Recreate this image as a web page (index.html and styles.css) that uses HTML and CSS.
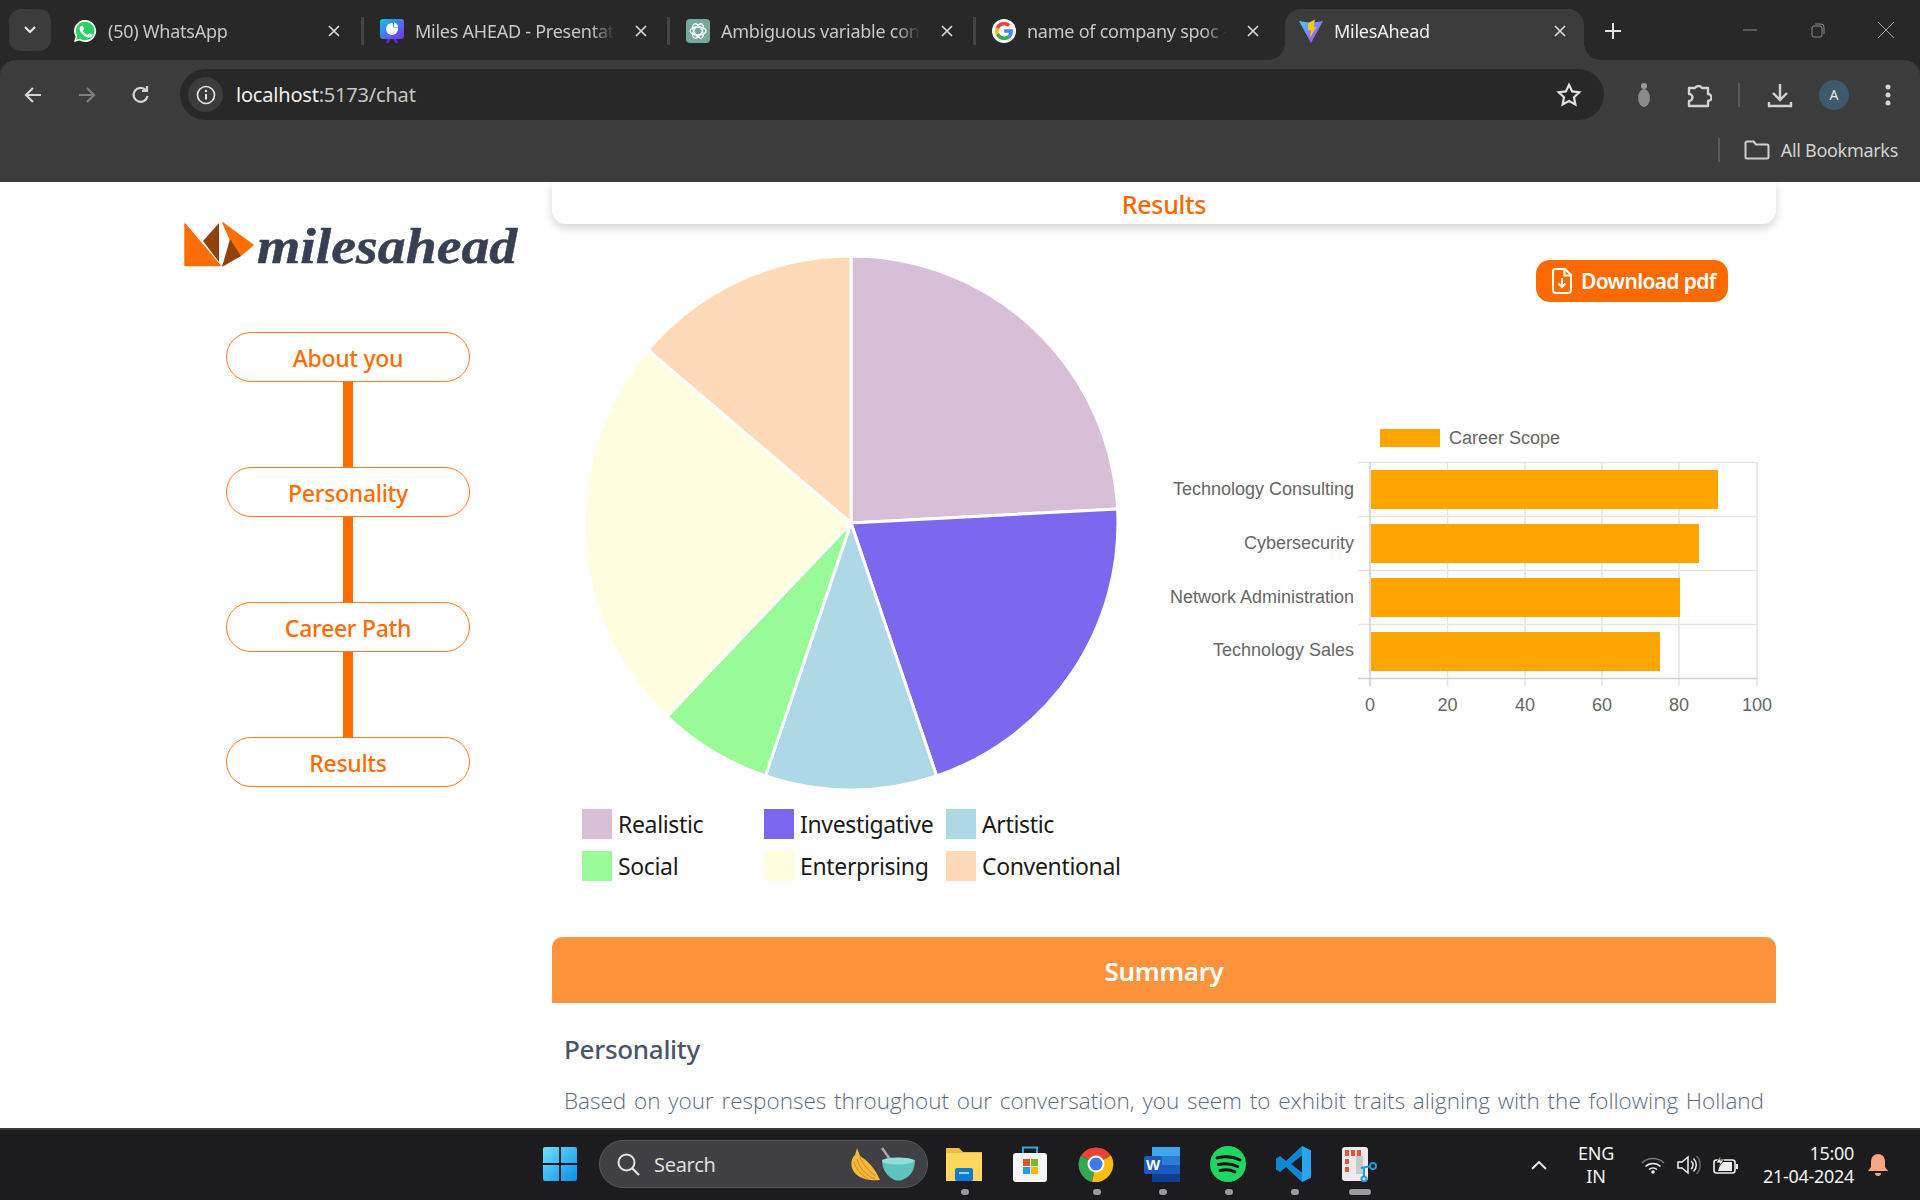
FILE: index.html
```html
<!DOCTYPE html>
<html lang="en">
<head>
<meta charset="utf-8">
<title>MilesAhead</title>
<link rel="stylesheet" href="styles.css">
</head>
<body>
<header class="tabstrip">
  <button class="tab-search"><svg width="14" height="10" viewBox="0 0 14 10"><path d="M2 2l5 5 5-5" fill="none" stroke="#e3e3e3" stroke-width="2.2"/></svg></button>
  <div class="tab first">
    <svg class="fav" viewBox="0 0 24 24"><path d="M12 1a11 11 0 0 0-9.4 16.6L1 23l5.6-1.5A11 11 0 1 0 12 1z" fill="#fff"/><path d="M12 2.800a9.200 9.200 0 0 0-7.800 14l-1 3.900 4-1A9.200 9.200 0 1 0 12 2.800z" fill="#25d366"/><path d="M8.800 6.800c-.3 0-.7.1-1 .5-.4.4-1.200 1.200-1.200 2.700s1.100 3 1.300 3.200c.2.200 2.200 3.500 5.400 4.700 2.700 1 3.200.8 3.800.7.600-.1 1.900-.8 2.100-1.500.3-.7.3-1.400.2-1.500-.1-.1-.3-.2-.7-.4l-2.100-1c-.3-.1-.5-.2-.7.2l-1 1.200c-.2.2-.4.2-.7.1-.3-.2-1.300-.5-2.500-1.600-.9-.8-1.600-1.800-1.700-2.100-.2-.3 0-.5.1-.6l.5-.6c.2-.2.2-.4.3-.6.1-.2 0-.4 0-.6l-1-2.300c-.2-.6-.5-.5-.7-.5z" fill="#fff"/></svg>
    <span class="tab-title">(50) WhatsApp</span>
    <svg class="x" viewBox="0 0 12 12"><path d="M1 1l10 10M11 1L1 11"/></svg>
  </div>
  <i class="tab-sep"></i>
  <div class="tab">
    <svg class="fav" viewBox="0 0 24 24"><defs><linearGradient id="mg" x1="0" y1="0" x2="1" y2="1"><stop offset="0" stop-color="#0fc3e8"/><stop offset="1" stop-color="#7c2bf0"/></linearGradient></defs><rect y="0" width="24" height="20" rx="3" fill="url(#mg)"/><path d="M8 20l-2 4h2.500l2-4zM16 20l2 4h-2.500l-2-4z" fill="#6d28d9"/><circle cx="12" cy="10" r="6" fill="#fff"/><path d="M13 3h4.500v5.500H13z" fill="#1e90e8"/><path d="M14 3.500a5 5 0 0 1 4 4.500h-4z" fill="#fff"/></svg>
    <span class="tab-title">Miles AHEAD - Presentat</span>
    <svg class="x" viewBox="0 0 12 12"><path d="M1 1l10 10M11 1L1 11"/></svg>
  </div>
  <i class="tab-sep"></i>
  <div class="tab">
    <svg class="fav" viewBox="0 0 24 24"><rect width="24" height="24" rx="4" fill="#74aa9c"/><g fill="none" stroke="#fff" stroke-width="1.300"><ellipse cx="12" cy="12" rx="8" ry="4" transform="rotate(60 12 12)"/><ellipse cx="12" cy="12" rx="8" ry="4" transform="rotate(120 12 12)"/><ellipse cx="12" cy="12" rx="8" ry="4"/></g></svg>
    <span class="tab-title">Ambiguous variable con</span>
    <svg class="x" viewBox="0 0 12 12"><path d="M1 1l10 10M11 1L1 11"/></svg>
  </div>
  <i class="tab-sep"></i>
  <div class="tab">
    <svg class="fav" viewBox="0 0 24 24"><circle cx="12" cy="12" r="12" fill="#fff"/><path d="M12.200 10.300v3.500h5a4.500 4.500 0 0 1-1.900 2.900l2.900 2.300c1.700-1.600 2.700-3.900 2.700-6.600 0-.7-.1-1.400-.2-2.100z" fill="#4285f4"/><path d="M6.900 13.700l-3 2.300A9.200 9.200 0 0 0 12.200 21c2.500 0 4.600-.8 6-2.100l-2.900-2.300c-.8.5-1.800.9-3.100.9-2.400 0-4.500-1.600-5.300-3.800z" fill="#34a853"/><path d="M3.900 7.900a9 9 0 0 0 0 8.100l3-2.300a5.500 5.500 0 0 1 0-3.500z" fill="#fbbc05"/><path d="M12.200 6.500c1.400 0 2.600.5 3.600 1.400l2.600-2.600A8.900 8.900 0 0 0 12.200 3 9.200 9.200 0 0 0 3.900 7.900l3 2.300c.8-2.200 2.900-3.700 5.300-3.700z" fill="#ea4335"/></svg>
    <span class="tab-title">name of company spoc -</span>
    <svg class="x" viewBox="0 0 12 12"><path d="M1 1l10 10M11 1L1 11"/></svg>
  </div>
  <div class="tab active">
    <svg class="fav" viewBox="0 0 24 24"><defs><linearGradient id="vg" x1="0" y1="0" x2="1" y2="1"><stop offset="0" stop-color="#41d1ff"/><stop offset="1" stop-color="#bd34fe"/></linearGradient></defs><path d="M0 2l12 2 12-2-12 22z" fill="url(#vg)"/><path d="M9 4l7-3.500-1.500 8 3-.8L11 19l1-8-3 .6z" fill="#ffc517"/></svg>
    <span class="tab-title">MilesAhead</span>
    <svg class="x" viewBox="0 0 12 12"><path d="M1 1l10 10M11 1L1 11"/></svg>
  </div>
  <svg class="new-tab" viewBox="0 0 16 16"><path d="M8 0v16M0 8h16"/></svg>
  <div class="win-controls">
    <svg viewBox="0 0 16 16"><path d="M1 8h14" stroke="#8b8b8b"/></svg>
    <svg viewBox="0 0 16 16"><rect x="2" y="4" width="10" height="11" rx="2" stroke="#8b8b8b" fill="none"/><path d="M5 2h6a3 3 0 0 1 3 3v7" stroke="#8b8b8b" fill="none"/></svg>
    <svg viewBox="0 0 16 16"><path d="M0 0l16 16M16 0L0 16" stroke="#a0a0a0"/></svg>
  </div>
</header>

<div class="toolbar">
  <nav class="nav-btns">
    <svg viewBox="0 0 20 20"><path d="M18 10H3M10 3l-7 7 7 7" class="ic"/></svg>
    <svg viewBox="0 0 20 20"><path d="M2 10h15M10 3l7 7-7 7" class="ic dim"/></svg>
    <svg viewBox="0 0 20 20"><path d="M16.500 11a7 7 0 1 1-1.800-6M16 1v5h-5" class="ic"/></svg>
  </nav>
  <div class="omnibox">
    <span class="info"><svg viewBox="0 0 20 20" width="20" height="20"><circle cx="10" cy="10" r="8.500" fill="none" stroke="#e3e3e3" stroke-width="1.700"/><path d="M10 9v5.500" stroke="#e3e3e3" stroke-width="2"/><circle cx="10" cy="6" r="1.200" fill="#e3e3e3"/></svg></span>
    <span class="url">localhost<span class="url-dim">:5173/chat</span></span>
    <svg class="star" viewBox="0 0 24 24" width="26" height="26"><path d="M12 2.500l2.900 6.200 6.600.8-4.900 4.600 1.300 6.700-5.900-3.300-5.900 3.300 1.300-6.700L2.500 9.500l6.600-.8z" fill="none" stroke="#e3e3e3" stroke-width="2"/></svg>
  </div>
  <div class="tool-icons">
    <svg class="i-mouse" viewBox="0 0 14 26" width="14" height="26"><ellipse cx="7" cy="16" rx="6" ry="9" fill="#8a8a8a"/><circle cx="7" cy="4" r="3" fill="#9c9c9c"/></svg>
    <svg class="i-ext" viewBox="0 0 26 26" width="26" height="26"><path d="M3 6h6a4 4 0 0 1 7 0h6v6a3.500 3.500 0 0 1 0 7v5H3v-5a3.500 3.500 0 0 0 0-7z" fill="none" stroke="#d2d2d2" stroke-width="2.400" stroke-linejoin="round"/></svg>
    <i class="tool-sep"></i>
    <svg class="i-dl" viewBox="0 0 26 26" width="26" height="26"><path d="M13 2v15M6 11l7 7 7-7M2 20v4h22v-4" fill="none" stroke="#d2d2d2" stroke-width="2.400"/></svg>
    <span class="avatar">A</span>
    <svg class="i-dots" viewBox="0 0 6 24" width="6" height="24"><circle cx="3" cy="4" r="2.500"/><circle cx="3" cy="12" r="2.500"/><circle cx="3" cy="20" r="2.500"/></svg>
  </div>
</div>

<div class="bookmarks">
  <i class="bm-sep"></i>
  <svg viewBox="0 0 26 20" width="26" height="20"><path d="M1.500 3a1.500 1.500 0 0 1 1.500-1.500h6.500l2.500 3h11a1.500 1.500 0 0 1 1.500 1.500v11a1.500 1.500 0 0 1-1.500 1.500H3A1.500 1.500 0 0 1 1.500 17z" fill="none" stroke="#cfcfcf" stroke-width="2"/></svg>
  <span class="bm-label">All Bookmarks</span>
</div>

<main class="page">
  <aside class="sidebar">
    <div class="logo">
      <svg class="logo-mark" viewBox="0 0 72 48" width="72" height="48"><path d="M1 2l35 41.500H1z" fill="#ff6d05" stroke="#ff6d05" stroke-width="1.500" stroke-linejoin="round"/><path d="M19 19l16-18v39z" fill="#93400a"/><path d="M39 1l30 22-13 11-10-17z" fill="#ff6d05" stroke="#ff6d05" stroke-width="1.500" stroke-linejoin="round"/><path d="M38 45l8-28 11 17z" fill="#93400a"/></svg>
      <span class="logo-text">milesahead</span>
    </div>
    <nav class="steps">
      <div class="step">About you</div>
      <i class="step-line"></i>
      <div class="step">Personality</div>
      <i class="step-line"></i>
      <div class="step">Career Path</div>
      <i class="step-line"></i>
      <div class="step">Results</div>
    </nav>
  </aside>

  <section class="content">
    <div class="results-card">Results</div>
    <div class="charts">
      <div class="pie-col">
        <svg class="pie" viewBox="-268 -268 536 536" width="536" height="536">
          <g stroke="#fff" stroke-width="3" stroke-linejoin="round">
            <path d="M0 0L0-267A267 267 0 0 1 266.600-14Z" fill="#d8bfd8"/>
            <path d="M0 0L266.600-14A267 267 0 0 1 85.600 252.900Z" fill="#7b68ee"/>
            <path d="M0 0L85.600 252.900A267 267 0 0 1-85.600 252.900Z" fill="#add8e6"/>
            <path d="M0 0L-85.600 252.900A267 267 0 0 1-184.100 193.400Z" fill="#98fb98"/>
            <path d="M0 0L-184.100 193.400A267 267 0 0 1-203.300-173Z" fill="#ffffe0"/>
            <path d="M0 0L-203.300-173A267 267 0 0 1 0-267Z" fill="#ffdab9"/>
          </g>
        </svg>
        <ul class="legend">
          <li><i class="sw sw-r"></i>Realistic</li>
          <li><i class="sw sw-i"></i>Investigative</li>
          <li><i class="sw sw-a"></i>Artistic</li>
          <li><i class="sw sw-s"></i>Social</li>
          <li><i class="sw sw-e"></i>Enterprising</li>
          <li><i class="sw sw-c"></i>Conventional</li>
        </ul>
      </div>
      <div class="bar-col">
        <button class="dl-btn"><svg viewBox="0 0 20 26" width="20" height="26"><path d="M3 1h10l6 6v15a3 3 0 0 1-3 3H4a3 3 0 0 1-3-3V3a2 2 0 0 1 2-2zM12.500 1v6.500H19M10 10v9M6.500 15.500L10 19l3.500-3.500" fill="none" stroke="#fff" stroke-width="2"/></svg>Download pdf</button>
        <svg class="bars" viewBox="0 0 626 300" width="626" height="300">
          <rect x="230" y="9" width="60" height="18" fill="#ffa500"/>
          <text x="299" y="24" class="ct">Career Scope</text>
          <g stroke="#e5e5e5" stroke-width="1.500">
            <path d="M208 42.500H607M208 96.500H607M208 150.500H607M208 204.500H607"/>
            <path d="M297.500 42V266M375 42V266M452 42V266M529 42V266M607 42V266"/>
          </g>
          <path d="M208 258.500H607M220 42V266" stroke="#cfcfcf" stroke-width="1.500"/>
          <g fill="#ffa500">
            <rect x="221" y="50" width="347" height="39"/>
            <rect x="221" y="104" width="328" height="39"/>
            <rect x="221" y="158" width="309" height="39"/>
            <rect x="221" y="212" width="289" height="39"/>
          </g>
          <g class="ct" text-anchor="end">
            <text x="204" y="75">Technology Consulting</text>
            <text x="204" y="129">Cybersecurity</text>
            <text x="204" y="183">Network Administration</text>
            <text x="204" y="236">Technology Sales</text>
          </g>
          <g class="ct" text-anchor="middle">
            <text x="220" y="291">0</text>
            <text x="297.500" y="291">20</text>
            <text x="375" y="291">40</text>
            <text x="452" y="291">60</text>
            <text x="529" y="291">80</text>
            <text x="607" y="291">100</text>
          </g>
        </svg>
      </div>
    </div>
    <div class="summary-bar">Summary</div>
    <div class="summary-body">
      <h2>Personality</h2>
      <p>Based on your responses throughout our conversation, you seem to exhibit traits aligning with the following Holland personality types:</p>
    </div>
  </section>
</main>

<footer class="taskbar">
  <div class="task-center">
    <svg class="win" viewBox="0 0 34 34" width="34" height="34"><defs><linearGradient id="wg" x1="0" y1="0" x2="1" y2="1"><stop offset="0" stop-color="#6fe0ff"/><stop offset="1" stop-color="#0a8fe8"/></linearGradient></defs><path d="M0 2a2 2 0 0 1 2-2h14v16H0zM18 0h14a2 2 0 0 1 2 2v14H18zM0 18h16v16H2a2 2 0 0 1-2-2zM18 18h16v14a2 2 0 0 1-2 2H18z" fill="url(#wg)"/></svg>
    <div class="search">
      <svg viewBox="0 0 24 24" width="24" height="24"><circle cx="10.500" cy="10.500" r="8" fill="none" stroke="#e6e6e6" stroke-width="2"/><path d="M16 16l7 7" stroke="#e6e6e6" stroke-width="2.200"/></svg>
      <span>Search</span>
      <svg class="search-art" viewBox="0 0 66 34" width="66" height="34"><path d="M8 1l3 8c7 4 15 12 20 24-10 1-21-1-26-8C0 18 3 10 6 8z" fill="#f5b93a"/><path d="M8 12c2 8 8 16 18 20M5 15c2 7 7 13 14 17M11 10c3 7 8 14 16 19" stroke="#d38a1c" fill="none"/><path d="M33 1l10 14" stroke="#a9a5ad" stroke-width="2.500"/><path d="M33 13c8-3 24-3 33 0 0 10-5 17-11 19-3 2-8 2-11 0-6-3-11-10-11-19z" fill="#5cc4bd"/><ellipse cx="49" cy="14" rx="16" ry="3.500" fill="#8ee0d4"/></svg>
    </div>
    <div class="apps">
      <div class="app"><svg viewBox="0 0 36 36"><path d="M0 2h13l4 4h19v29H0z" fill="#f4b93f"/><path d="M0 7h36v28H0z" fill="#ffd75e"/><rect x="9" y="22" width="18" height="13" rx="2" fill="#0f7bd0"/><path d="M13 27h10" stroke="#9bd8ff" stroke-width="2"/></svg><i class="dot"></i></div>
      <div class="app"><svg viewBox="0 0 36 36"><path d="M11 7V1.500h14V7" fill="none" stroke="#29a8e8" stroke-width="2"/><rect x="1" y="7" width="34" height="29" rx="3" fill="#f5f5f5"/><rect x="11" y="13" width="7" height="7" fill="#ea4f2a"/><rect x="19" y="13" width="7" height="7" fill="#7cb82a"/><rect x="11" y="21" width="7" height="7" fill="#1aa1e8"/><rect x="19" y="21" width="7" height="7" fill="#fdb900"/></svg><i class="dot hidden"></i></div>
      <div class="app"><svg viewBox="0 0 36 36"><path d="M18 18L3 9.500A18 18 0 0 1 33 9.500z" fill="#ea4335"/><path d="M18 18L3 9.500A18 18 0 0 0 14 36z" fill="#34a853"/><path d="M18 18l15-8.500A18 18 0 0 1 14 36z" fill="#fbbc05"/><circle cx="18" cy="18" r="8.500" fill="#fff"/><circle cx="18" cy="18" r="6.500" fill="#3b7bea"/></svg><i class="dot"></i></div>
      <div class="app"><svg viewBox="0 0 36 36"><rect x="8" y="1" width="28" height="35" rx="2" fill="#2b7cd3"/><rect x="8" y="1" width="28" height="9" fill="#41a5ee"/><rect x="8" y="19" width="28" height="9" fill="#185abd"/><rect x="8" y="28" width="28" height="8" fill="#103f91"/><rect x="0" y="10" width="18" height="18" rx="2" fill="#185abd"/><text x="9" y="24" class="word-w">W</text></svg><i class="dot"></i></div>
      <div class="app"><svg viewBox="0 0 36 36"><circle cx="18" cy="18" r="18" fill="#1ed760"/><path d="M7 12c8-2 16-1.500 23 2M8.500 18.500c7-1.500 13-1 19 2M10 24.500c5-1 11-.8 15 1.500" fill="none" stroke="#111" stroke-width="3" stroke-linecap="round"/></svg><i class="dot"></i></div>
      <div class="app"><svg viewBox="0 0 36 36"><path d="M26 0l9 4.500v27L26 36 10 21l-6 5-4-2.500V12.500L4 10l6 5z" fill="#0e86d4"/><path d="M26 9.500L15 18l11 8.500z" fill="#1c1c1c"/><path d="M26 0l9 4.500v27L26 36z" fill="#27a5ee"/></svg><i class="dot"></i></div>
      <div class="app"><svg viewBox="0 0 36 36"><rect x="0" y="1" width="26" height="34" rx="3" fill="#eceaea"/><rect x="3" y="4" width="4" height="6" fill="#e8513a"/><rect x="9" y="4" width="4" height="6" fill="#e8513a"/><rect x="15" y="4" width="4" height="6" fill="#e8513a"/><rect x="3" y="13" width="4" height="5" fill="#e8513a"/><rect x="3" y="21" width="4" height="5" fill="#e8513a"/><rect x="14" y="10" width="7" height="18" fill="#c9c9c9"/><path d="M19 22l10-2M22 30V22" stroke="#1f9bd8" stroke-width="2"/><circle cx="31" cy="20" r="3" fill="none" stroke="#1f9bd8" stroke-width="2"/><circle cx="22" cy="33" r="2.500" fill="none" stroke="#1f9bd8" stroke-width="2"/></svg><i class="dot wide"></i></div>
    </div>
  </div>
  <div class="tray">
    <svg viewBox="0 0 16 10" width="16" height="10"><path d="M1 9l7-7 7 7" fill="none" stroke="#eee" stroke-width="1.800"/></svg>
    <div class="lang"><div>ENG</div><div>IN</div></div>
    <svg class="tr-wifi" viewBox="0 0 24 18" width="24" height="18"><path d="M1 7a16 16 0 0 1 22 0" fill="none" stroke="#777" stroke-width="1.500"/><path d="M4.500 10.500a11 11 0 0 1 15 0M8 13.500a6 6 0 0 1 8 0" fill="none" stroke="#eee" stroke-width="1.500"/><circle cx="12" cy="16" r="1.800" fill="#eee"/></svg>
    <svg class="tr-vol" viewBox="0 0 24 20" width="24" height="20"><path d="M1 7h4l6-5v16l-6-5H1z" fill="none" stroke="#eee" stroke-width="1.500"/><path d="M14 6a5 5 0 0 1 0 8M16.500 3.500a9 9 0 0 1 0 13" fill="none" stroke="#eee" stroke-width="1.500"/><path d="M19.500 1a13 13 0 0 1 0 18" fill="none" stroke="#666" stroke-width="1.500"/></svg>
    <svg class="tr-bat" viewBox="0 0 26 20" width="26" height="20"><rect x="1" y="5" width="21" height="13" rx="2.500" fill="none" stroke="#eee" stroke-width="1.600"/><path d="M24 9v5" stroke="#eee" stroke-width="2"/><path d="M8 7h11v9H5z" fill="#eee"/><path d="M8 0L3 8h4l-2 5 6-8H7z" fill="#eee" stroke="#1c1c1c" stroke-width=".8"/></svg>
    <div class="clock"><div>15:00</div><div>21-04-2024</div></div>
    <svg class="bell" viewBox="0 0 20 24" width="20" height="24"><path d="M10 1a7 7 0 0 0-7 7v6l-3 4h20l-3-4V8a7 7 0 0 0-7-7z" fill="#f9a57f"/><path d="M7 20a3 3 0 0 0 6 0z" fill="#f9a57f"/></svg>
  </div>
</footer>
</body>
</html>
```

FILE: styles.css
```css
* { box-sizing: border-box; }
html, body { margin: 0; padding: 0; }
body {
  width: 1920px; height: 1200px; overflow: hidden;
  display: flex; flex-direction: column;
  font-family: "Noto Sans", "Open Sans", sans-serif;
  background: #282828;
}
i { display: block; font-style: normal; }

/* tab strip */
.tabstrip { height: 60px; flex: none; background: #282828; display: flex; align-items: flex-start; position: relative; }
.tab-search { width: 42px; height: 42px; margin: 9px 0 0 9px; border: 0; border-radius: 12px; background: #3c3c3c; display: flex; align-items: center; justify-content: center; padding: 0; }
.tab { width: 303px; height: 51px; margin-top: 9px; padding: 0 0 7px 16px; display: flex; align-items: center; gap: 11px; color: #c7c7c7; flex: none; }
.tab.first { width: 300px; margin-left: 10px; padding-left: 12px; }
.fav { width: 24px; height: 24px; flex: none; }
.tab-title { font-size: 18px; width: 200px; white-space: nowrap; overflow: hidden; letter-spacing: -.25px; -webkit-mask-image: linear-gradient(90deg, #000 88%, transparent); mask-image: linear-gradient(90deg, #000 88%, transparent); }
.x { width: 12px; height: 12px; margin-left: 9px; margin-top: -1px; flex: none; }
.x path { stroke: #d8d8d8; stroke-width: 1.700; fill: none; }
.tab-sep { width: 3px; height: 28px; background: #444; margin-top: 17px; flex: none; }
.tab.active { width: 299px; margin-left: 6px; background: #3c3c3c; border-radius: 16px 16px 0 0; color: #f0f0f0; padding-left: 14px; position: relative; }
.tab.active::before, .tab.active::after { content: ""; position: absolute; bottom: 0; width: 16px; height: 16px; }
.tab.active::before { left: -16px; background: radial-gradient(circle at 0 0, transparent 15.5px, #3c3c3c 16px); }
.tab.active::after { right: -16px; background: radial-gradient(circle at 100% 0, transparent 15.5px, #3c3c3c 16px); }
.tabstrip .new-tab { width: 16px; height: 16px; margin: 23px 0 0 21px; flex: none; }
.new-tab path { stroke: #e3e3e3; stroke-width: 2; }
.win-controls { margin-left: auto; display: flex; gap: 52px; padding: 22px 26px 0 0; }
.win-controls svg { width: 16px; height: 16px; }

/* toolbar */
.toolbar { height: 69px; flex: none; background: #3c3c3c; border-radius: 16px 16px 0 0; display: flex; align-items: center; }
.nav-btns { display: flex; gap: 34px; width: 180px; padding-left: 23px; flex: none; }
.nav-btns svg { width: 20px; height: 20px; }
.ic { fill: none; stroke: #d4d4d4; stroke-width: 2.200; }
.ic.dim { stroke: #7f7f7f; }
.omnibox { width: 1424px; height: 51px; background: #282828; border-radius: 26px; display: flex; align-items: center; padding: 0 22px 0 8px; flex: none; }
.info { width: 35px; height: 35px; border-radius: 50%; background: #3c3c3c; display: flex; align-items: center; justify-content: center; flex: none; }
.url { margin-left: 13px; font-size: 20px; color: #f0f0f0; letter-spacing: -.2px; }
.url-dim { color: #c6c6c6; }
.star { margin-left: auto; }
.tool-icons { display: flex; align-items: center; flex: 1; height: 40px; padding-left: 33px; }
.i-ext { margin-left: 35px; }
.tool-sep { width: 2px; height: 24px; background: #5a5a5a; margin-left: 26px; }
.i-dl { margin-left: 27px; }
.avatar { width: 30px; height: 30px; border-radius: 50%; background: #3d5a6c; color: #e8e8e8; font-size: 14px; display: flex; align-items: center; justify-content: center; margin-left: 26px; }
.i-dots { margin-left: 36px; fill: #d2d2d2; }

/* bookmarks */
.bookmarks { height: 53px; flex: none; background: #3c3c3c; display: flex; align-items: center; justify-content: flex-end; padding: 0 22px 12px 0; }
.bm-sep { width: 2px; height: 24px; background: #5a5a5a; margin-right: 24px; }
.bm-label { margin-left: 11px; font-size: 18px; color: #d2d2d2; letter-spacing: -.3px; }

/* page */
.page { flex: 1; min-height: 0; overflow: hidden; display: flex; background: #fff; }
.sidebar { width: 552px; flex: none; padding-top: 40px; }
.logo { display: flex; align-items: center; margin-left: 184px; height: 48px; }
.logo-text { font-family: "Liberation Serif", serif; font-weight: 700; font-style: italic; font-size: 50px; color: #373f52; margin-left: 1px; line-height: 1; display: inline-block; transform: scaleX(1.115); transform-origin: left center; -webkit-text-stroke: .5px #373f52; }
.steps { margin: 62px 0 0 226px; width: 244px; display: flex; flex-direction: column; align-items: center; }
.step { width: 244px; height: 50px; border: 1.500px solid #ff7a1a; border-radius: 25px; color: #ff6d00; font-size: 23px; font-weight: 500; display: flex; align-items: center; justify-content: center; padding-top: 1px; letter-spacing: -.3px; }
.step-line { width: 10px; height: 85px; background: #ff6d00; }

.content { width: 1224px; flex: none; }
.results-card { height: 42px; background: #fff; border-radius: 0 0 14px 14px; box-shadow: 0 4px 10px rgba(0,0,0,.16); color: #ff6600; font-size: 25px; font-weight: 500; text-align: center; line-height: 44px; letter-spacing: -.3px; }
.charts { display: flex; height: 713px; }
.pie-col { width: 598px; padding: 31px 0 0 30px; flex: none; }
.pie { display: block; margin-left: 1px; }
.legend { list-style: none; margin: 18px 0 0; padding: 0; display: grid; grid-template-columns: repeat(3, 182px); row-gap: 12px; }
.legend li { display: flex; align-items: center; height: 30px; font-size: 23px; color: #1a1a1a; white-space: nowrap; letter-spacing: -.35px; }
.sw { width: 30px; height: 30px; margin-right: 6px; flex: none; }
.sw-r { background: #d8bfd8; } .sw-i { background: #7b68ee; } .sw-a { background: #add8e6; }
.sw-s { background: #98fb98; } .sw-e { background: #ffffe0; } .sw-c { background: #ffdab9; }
.bar-col { flex: 1; display: flex; flex-direction: column; padding-top: 36px; }
.dl-btn { align-self: flex-end; margin-right: 48px; width: 192px; height: 42px; border: 0; border-radius: 14px; background: #ff6a00; color: #fff; font-family: inherit; font-size: 21px; font-weight: 600; display: flex; align-items: center; gap: 9px; padding: 0 0 0 16px; letter-spacing: -.65px; }
.bars { display: block; margin-top: 118px; }
.ct { font-family: "Liberation Sans", Arial, sans-serif; font-size: 18px; fill: #666; stroke: none; }
.summary-bar { height: 66px; background: #fd943b; border-radius: 10px 10px 0 0; color: #fff; font-size: 26px; font-weight: 600; text-align: center; line-height: 68px; letter-spacing: -.4px; }
.summary-body { padding: 0 12px; }
.summary-body h2 { margin: 26px 0 0; font-size: 26px; font-weight: 500; color: #4a5568; line-height: 40px; letter-spacing: -.3px; }
.summary-body p { margin: 14px 0 0; font-size: 22.500px; font-weight: 300; line-height: 36px; color: #5d6b80; text-align: justify; font-family: "Open Sans", sans-serif; }

/* taskbar */
.taskbar { height: 72px; flex: none; background: #1c1c1e; border-top: 2px solid #3a3a3a; display: flex; position: relative; color: #f2f2f2; }
.task-center { display: flex; align-items: center; margin-left: 543px; height: 68px; }
.win { flex: none; }
.search { margin-left: 22px; width: 329px; height: 48px; border-radius: 24px; background: #403f43; border: 1px solid #57565a; display: flex; align-items: center; padding: 0 12px 0 16px; color: #dedede; font-size: 20px; letter-spacing: -.3px; }
.search span { margin-left: 14px; }
.search-art { margin-left: auto; }
.apps { display: flex; margin-left: 18px; gap: 30px; }
.app { width: 36px; height: 36px; position: relative; }
.app > svg { width: 36px; height: 36px; display: block; }
.dot { position: absolute; left: 15px; top: 43px; width: 8px; height: 6px; border-radius: 3px; background: #9a9a9a; }
.dot.hidden { display: none; }
.dot.wide { left: 7px; width: 22px; }
.word-w { font-family: "Liberation Sans", sans-serif; font-size: 15px; font-weight: 700; fill: #fff; text-anchor: middle; }
.tray { margin-left: auto; display: flex; align-items: center; padding-right: 32px; height: 70px; font-size: 18px; }
.lang { width: 50px; margin-left: 24px; text-align: center; line-height: 23px; letter-spacing: -.2px; }
.tr-wifi { margin-left: 20px; }
.tr-vol { margin-left: 12px; }
.tr-bat { margin-left: 12px; }
.clock { margin-left: 11px; width: 104px; text-align: right; line-height: 23px; letter-spacing: -.3px; font-size: 18px; }
.bell { margin-left: 14px; }
```
